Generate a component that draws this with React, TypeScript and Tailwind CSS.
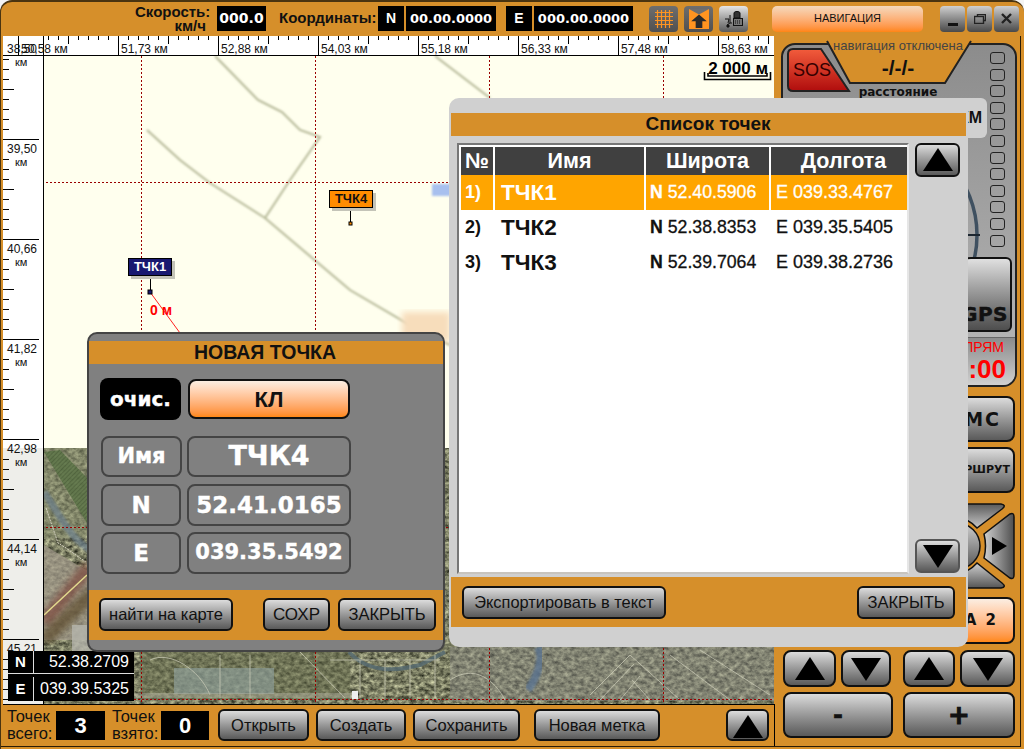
const BTN = "bg-linear-to-b from-[#dcdcdc] to-[#5a5a5a] border-2 border-[#111] rounded-[6px] flex items-center justify-center text-[#111]";
const ORANGE_BTN = "bg-linear-to-b from-[#fbeee2] to-[#ff8812] border-2 border-[#111] rounded-[6px] flex items-center justify-center text-[#111]";
const VERDANA = "font-['DejaVu_Sans',sans-serif] font-bold";
const FIELD = "border-2 border-[#444] rounded-[8px] flex items-center justify-center text-white font-['DejaVu_Sans',sans-serif] font-bold [-webkit-text-stroke:0.4px_white]";

const rows = [
  { no: "1)", name: "ТЧК1", lat: "52.40.5906", lon: "039.33.4767", active: true },
  { no: "2)", name: "ТЧК2", lat: "52.38.8353", lon: "039.35.5405", active: false },
  { no: "3)", name: "ТЧК3", lat: "52.39.7064", lon: "039.38.2736", active: false },
];

const topLabels = ["51,73", "52,88", "54,03", "55,18", "56,33", "57,48", "58,63"];
const leftLabels = ["39,50", "40,66", "41,82", "42,98", "44,14", "45,21"];

function Tri({ down = false, size = 30 }: { down?: boolean; size?: number }) {
  return (
    <svg width={size} height={size * 0.8} viewBox="0 0 30 24">
      <polygon points={down ? "0,1 30,1 15,24" : "15,0 30,23 0,23"} fill="#000" />
    </svg>
  );
}

function TopRuler() {
  const ticks = [];
  for (let x = 48; x < 774; x += 10) {
    const mid = (x - 18) % 50 === 0;
    ticks.push(<line key={x} x1={x + 0.5} x2={x + 0.5} y1={36} y2={mid ? 44 : 40} stroke="#000" />);
  }
  return (
    <svg className="block h-[20px] w-[771px] shrink-0 border-b border-black bg-white" viewBox="3 36 771 19" width={771} height={19}>
      {ticks}
      <line x1="18.5" x2="18.5" y1="36" y2="55" stroke="#000" />
      <line x1="43.5" x2="43.5" y1="36" y2="55" stroke="#000" />
      <text x="7" y="53" fontSize="12" fontFamily="Liberation Sans" fill="#111">38,50</text>
      <text x="21" y="53" fontSize="12" fontFamily="Liberation Sans" fill="#111">50,58 км</text>
      {topLabels.map((label, i) => (
        <g key={label}>
          <line x1={118.5 + i * 100} x2={118.5 + i * 100} y1="36" y2="55" stroke="#000" />
          <text x={121 + i * 100} y="53" fontSize="12" fontFamily="Liberation Sans" fill="#111">{label} км</text>
        </g>
      ))}
    </svg>
  );
}

function LeftRuler() {
  const ticks = [];
  for (let y = 59; y < 704; y += 10) {
    const step = (y - 39) % 100;
    if (step === 0 || step === 10) continue;
    ticks.push(<line key={y} x1="3" x2={step === 50 ? 14 : 9} y1={y + 0.5} y2={y + 0.5} stroke="#000" />);
  }
  return (
    <svg className="block shrink-0" width={41} height={648} viewBox="3 56 41 648">
      <rect x="3" y="56" width="40" height="392" fill="#fff" />
      <rect x="3" y="448" width="40" height="256" fill="#eeeeea" />
      {ticks}
      <line x1="43.5" x2="43.5" y1="56" y2="704" stroke="#000" />
      <text x="15" y="66" fontSize="11" fontFamily="Liberation Sans" fill="#111">км</text>
      {leftLabels.map((label, i) => (
        <g key={label}>
          <line x1="3" x2="39" y1={139.5 + i * 100} y2={139.5 + i * 100} stroke="#000" />
          <text x="7" y={153 + i * 100} fontSize="12" fontFamily="Liberation Sans" fill="#111">{label}</text>
          <text x="15" y={166 + i * 100} fontSize="11" fontFamily="Liberation Sans" fill="#111">км</text>
        </g>
      ))}
    </svg>
  );
}

function MapDrawing() {
  const gridX = [141, 315, 489, 663];
  const gridY = [182, 527, 699];
  return (
    <svg className="absolute inset-0" width={730} height={648} viewBox="44 56 730 648">
      <defs>
        <filter id="sat" x="0" y="0" width="100%" height="100%" colorInterpolationFilters="sRGB">
          <feTurbulence type="fractalNoise" baseFrequency="0.2 0.26" numOctaves="3" seed="7" />
          <feColorMatrix values="0.9 0 0 0 0.03  0.9 0 0 0 0.04  0.75 0 0 0 0.01  0 0 0 0 1" />
        </filter>
        <filter id="soft"><feGaussianBlur stdDeviation="0.8" /></filter>
        <filter id="softer"><feGaussianBlur stdDeviation="3" /></filter>
        <pattern id="rows" width="3" height="3" patternUnits="userSpaceOnUse" patternTransform="rotate(45)">
          <rect width="3" height="3" fill="#5d7548" />
          <rect width="1" height="3" fill="#4b6139" />
        </pattern>
      </defs>
      <rect x="44" y="56" width="730" height="392" fill="#ffffee" />
      <g fill="none" stroke="#b4b796" strokeWidth="2" filter="url(#soft)">
        <path d="M215 56 L258 100 L282 112 L300 130 L320 137 L290 180 L265 218" />
        <path d="M147 130 L180 160 L210 183 L265 218 L350 290 L410 325 L450 345" />
        <path d="M435 56 L490 98" />
      </g>
      <rect x="432" y="184" width="20" height="12" fill="#a8c0ee" filter="url(#soft)" />
      <rect x="402" y="312" width="48" height="30" fill="#f7ddbb" filter="url(#softer)" />

      <rect x="44" y="448" width="730" height="256" fill="#7a7860" filter="url(#sat)" />
      <rect x="44" y="448" width="50" height="90" fill="#8a9070" opacity="0.5" />
      <path d="M44 452 L60 450 L94 485 L94 535 Z" fill="url(#rows)" opacity="0.85" />
      <path d="M44 492 C60 515 70 540 94 552" stroke="#6c7f8c" strokeWidth="7" fill="none" opacity="0.7" filter="url(#soft)" />
      <path d="M46 508 L58 543 L66 548 L90 565" stroke="#d8d4c4" strokeWidth="1" strokeDasharray="2 1" fill="none" />
      <path d="M44 545 L94 575 L94 640 L44 640 Z" fill="#a39a8c" opacity="0.7" />
      <path d="M44 622 L90 566" stroke="#7d4a3c" strokeWidth="14" opacity="0.7" filter="url(#softer)" />
      <path d="M44 640 L94 592" stroke="#5c4a2a" strokeWidth="14" opacity="0.7" filter="url(#softer)" />
      <path d="M44 615 L87 575" stroke="#e2da8e" strokeWidth="1.5" fill="none" />
      <rect x="72" y="625" width="22" height="28" fill="#b5b5ac" opacity="0.8" />

      <rect x="140" y="652" width="210" height="48" fill="#64694a" opacity="0.5" />
      <rect x="174" y="668" width="100" height="26" fill="#8fa2a0" opacity="0.6" />
      <rect x="450" y="647" width="324" height="54" fill="#8a8a84" opacity="0.45" />
      <path d="M349 652 C370 675 400 670 420 665 L445 652" stroke="#566a70" strokeWidth="4" fill="none" opacity="0.85" />
      <path d="M538 647 C545 660 535 680 528 690" stroke="#5a7390" strokeWidth="8" fill="none" opacity="0.8" filter="url(#soft)" />
      <g stroke="#d0d0bc" strokeWidth="1" fill="none" opacity="0.7">
        <path d="M150 660 C170 650 200 670 210 695 M220 655 V698 M250 655 V698 M300 652 L345 698 M330 660 H440 M360 660 V698 M385 660 V698 M410 660 V698 M435 655 V698" />
        <path d="M590 695 L630 655 L680 700 M600 700 L634 664 M620 700 L640 676 M650 700 L632 680 M670 655 L730 700 M700 650 L770 695 M450 680 C480 660 500 690 505 700" />
      </g>
      <rect x="64" y="693" width="290" height="5" fill="#b5b5a5" opacity="0.45" />
      <rect x="352" y="691" width="6" height="8" fill="#eee" />
      {gridX.map((x) => (
        <line key={x} x1={x + 0.5} x2={x + 0.5} y1="56" y2="704" stroke="#990000" strokeDasharray="2 2" />
      ))}
      {gridY.map((y) => (
        <line key={y} x1="46" x2="774" y1={y + 0.5} y2={y + 0.5} stroke="#990000" strokeDasharray="2 2" />
      ))}
      <line x1="150" y1="292" x2="180" y2="333" stroke="#f22" />
      <line x1="150.5" x2="150.5" y1="275" y2="292" stroke="#000" />
      <rect x="148" y="290" width="4" height="4" fill="#191970" stroke="#000" />
      <line x1="350.5" x2="350.5" y1="208" y2="224" stroke="#000" />
      <rect x="349" y="222" width="3" height="3" fill="#ff8c00" stroke="#000" />
      <path d="M704.5 72 V79.5 H770.5 V72" stroke="#000" strokeWidth="1.6" fill="none" />
      <path d="M708 73 V76 H767 V73" stroke="#000" strokeWidth="1.6" fill="none" />
      <text x="150" y="315" fontSize="14" fontWeight="700" fontFamily="Liberation Sans" fill="#f00">0 м</text>
    </svg>
  );
}

function Pin({ name, className }: { name: string; className: string }) {
  return (
    <div className={`absolute h-[18px] w-[44px] border border-black text-center text-[13px] leading-[15px] font-bold shadow-[3px_3px_0_#c4c4b8] ${className}`}>
      {name}
    </div>
  );
}

function TopBar() {
  return (
    <div className="flex h-[34px] shrink-0 items-center pb-[1px] pl-[134px] font-['Liberation_Sans',sans-serif]">
      <div className="w-[74px] text-right text-[15px] leading-[14px] font-bold text-[#111]">
        Скорость:
        <br />
        <span className="pr-[3px]">км/ч</span>
      </div>
      <div className={`ml-[8px] flex h-[25px] w-[49px] items-center justify-center bg-black text-[14px] text-white ${VERDANA}`}>000.0</div>
      <div className="ml-[13px] w-[97px] text-[15px] font-bold whitespace-nowrap text-[#111]">Координаты:</div>
      <div className="ml-[2px] flex h-[25px] w-[26px] items-center justify-center bg-black text-[14px] font-bold text-white">N</div>
      <div className={`ml-[2px] flex h-[25px] w-[90px] items-center justify-center bg-black text-[13px] text-white ${VERDANA}`}>00.00.0000</div>
      <div className="ml-[10px] flex h-[25px] w-[26px] items-center justify-center bg-black text-[14px] font-bold text-white">E</div>
      <div className={`ml-[2px] flex h-[25px] w-[99px] items-center justify-center bg-black text-[13px] text-white ${VERDANA}`}>000.00.0000</div>

      <div className="ml-[16px] flex h-[26px] w-[29px] items-center justify-center rounded-[4px] bg-linear-to-b from-[#6e6e6e] to-[#505050]">
        <svg width="18" height="18" viewBox="0 0 18 18" stroke="#ff9420" strokeWidth="1.2" fill="none">
          <path d="M0 2.5H18M0 6.5H18M0 10.5H18M0 14.5H18M2.5 0V18M6.5 0V18M10.5 0V18M14.5 0V18" />
        </svg>
      </div>
      <div className="ml-[6px] flex h-[26px] w-[29px] items-center justify-center rounded-[4px] bg-linear-to-b from-[#6e6e6e] to-[#505050]">
        <svg width="20" height="20" viewBox="0 0 18 18">
          <path d="M0 0H18V18H0Z" fill="#ff9420" />
          <path d="M0 0L9 5L18 0" fill="#6e6e6e" />
          <path d="M9 5L16 11H12V17H6V11H2Z" fill="#2a2a2a" />
        </svg>
      </div>
      <div className="ml-[6px] flex h-[26px] w-[29px] items-center justify-center rounded-[4px] bg-linear-to-b from-[#e6e6e6] to-[#5c5c5c]">
        <svg width="20" height="18" viewBox="0 0 20 18" fill="none" stroke="#111">
          <path d="M10 8V3C10 1 16 1 16 3V8Z" fill="#333" />
          <rect x="9.5" y="8.5" width="9" height="7" fill="#777" />
          <path d="M11 11H17M11 13H17" strokeDasharray="1 1" />
          <path d="M6 5V13H8M6 13L3 15M1 9H5L4 13" />
          <circle cx="4" cy="16" r="1.2" fill="#111" />
        </svg>
      </div>

      <div className="ml-[24px] flex h-[26px] w-[151px] items-center justify-center rounded-[5px] bg-linear-to-b from-[#f4d9bd] to-[#ff8510] text-[11px] text-[#111]">
        НАВИГАЦИЯ
      </div>

      <div className="ml-[17px] flex gap-[2px]">
        <div className="flex h-[26px] w-[25px] items-end justify-center rounded-[4px] bg-linear-to-b from-[#d0d0d0] to-[#4a4a4a] pb-[6px]">
          <div className="h-[3px] w-[10px] bg-[#111]" />
        </div>
        <div className="flex h-[26px] w-[25px] items-center justify-center rounded-[4px] bg-linear-to-b from-[#d0d0d0] to-[#4a4a4a]">
          <svg width="12" height="10" viewBox="0 0 12 10" fill="none" stroke="#222">
            <path d="M3.5 2.5V0.5H11.5V6.5H9" strokeWidth="1.4" />
            <rect x="0.5" y="2.5" width="9" height="7" strokeWidth="1.4" />
          </svg>
        </div>
        <div className="flex h-[26px] w-[25px] items-center justify-center rounded-[4px] bg-linear-to-b from-[#d0d0d0] to-[#4a4a4a]">
          <svg width="11" height="11" viewBox="0 0 11 11" stroke="#222" strokeWidth="2.4">
            <path d="M1 1L10 10M10 1L1 10" />
          </svg>
        </div>
      </div>
    </div>
  );
}

function BottomBar() {
  return (
    <div className="flex h-[42px] shrink-0 items-center border-t border-r border-black pb-[1px] pl-[4px] font-['Liberation_Sans',sans-serif] text-[#111]">
      <div className="w-[49px] text-[16.5px] leading-[17px] whitespace-nowrap">Точек<br />всего:</div>
      <div className="flex h-[29px] w-[49px] items-center justify-center bg-black text-[22px] font-bold text-white">3</div>
      <div className="ml-[7px] w-[49px] text-[16.5px] leading-[17px] whitespace-nowrap">Точек<br />взято:</div>
      <div className="flex h-[29px] w-[48px] items-center justify-center bg-black text-[22px] font-bold text-white">0</div>
      <div className={`ml-[9px] h-[32px] w-[91px] text-[16.5px] ${BTN}`}>Открыть</div>
      <div className={`ml-[7px] h-[32px] w-[90px] text-[16.5px] ${BTN}`}>Создать</div>
      <div className={`ml-[7px] h-[32px] w-[107px] text-[16.5px] ${BTN}`}>Сохранить</div>
      <div className={`ml-[14px] h-[32px] w-[126px] text-[16.5px] ${BTN}`}>Новая метка</div>
      <div className={`ml-[66px] h-[32px] w-[43px] !items-end ${BTN}`}>
        <Tri size={30} />
      </div>
    </div>
  );
}

function NavCard() {
  const leds = Array.from({ length: 12 }, (_, i) => i);
  return (
    <div className="relative flex h-[344px] flex-col rounded-[14px] border-2 border-[#222] bg-linear-to-b from-[#8c8c8c] to-[#b8b8b8] font-['Liberation_Sans',sans-serif]">
      <div className="flex h-[211px]">
        <div className="relative w-[205px] shrink-0">
          <svg className="absolute top-[-2px] left-[-2px] overflow-visible" width="207" height="55" viewBox="781 43 207 55">
            <path d="M827 41 L850 83 H945 L971 41 Z" fill="#d68f2a" />
            <path d="M827 41 L850 83 H945 L971 41" fill="none" stroke="#222" strokeWidth="2" />
            <path d="M793 49 H821 L849 91 H793 Q788 91 788 86 V54 Q788 49 793 49 Z" fill="url(#sos)" stroke="#222" strokeWidth="2" />
            <defs>
              <linearGradient id="sos" x1="0" y1="0" x2="0" y2="1">
                <stop offset="0" stopColor="#f25c3c" />
                <stop offset="1" stopColor="#b00d0d" />
              </linearGradient>
            </defs>
            <text x="793" y="76" fontSize="18" fontFamily="Liberation Sans" fill="#300">SOS</text>
          </svg>
          <div className="relative mt-[-6px] flex w-[230px] flex-col items-center">
            <div className="text-[13px] leading-[14px] text-[#444]">навигация отключена</div>
            <div className="mt-[3px] text-[21px] leading-[24px] font-bold text-[#111]">-/-/-</div>
            <div className={`mt-[5px] text-[12px] leading-[14px] text-[#111] ${VERDANA}`}>расстояние</div>
          </div>
          <div className="relative mt-[-1px] flex h-[40px] w-[204px] items-center justify-end rounded-[6px] bg-[#d0d0d0] pr-[5px] text-[16px] font-bold text-[#111]">
            0 КМ
          </div>
          <svg className="overflow-visible" width="203" height="118" viewBox="783 138 203 118">
            <circle cx="872" cy="235" r="105" fill="none" stroke="#3f5060" strokeWidth="3.5" />
            <line x1="967" x2="980" y1="235" y2="235" stroke="#1c2630" strokeWidth="2" />
          </svg>
        </div>
        <div className="ml-[2px] flex flex-col gap-[4.6px] pt-[7px]">
          {leds.map((i) => (
            <div key={i} className="h-[12px] w-[15px] rounded-[3px] border-[1.5px] border-[#222]" />
          ))}
        </div>
      </div>
      <div className="relative flex justify-end pr-[3px]">
        <div className="mt-[1px] flex h-[75px] w-[75px] items-end justify-end rounded-tl-[34px] rounded-tr-[6px] rounded-br-[6px] border-2 border-[#111] bg-linear-to-b from-[#e0e0e0] to-[#4e4e4e] pr-[2px] pb-[6px]">
          <span className={`text-[20px] leading-[20px] tracking-[0.5px] text-[#111] [-webkit-text-stroke:0.5px_#111] ${VERDANA}`}>GPS</span>
        </div>
      </div>
      <div className="mt-[5px] flex flex-1 flex-col items-end rounded-br-[12px] border-t border-[#666] bg-linear-to-b from-[#8c8c8c] to-[#d0d0d0] pr-[9px] text-[#f00]">
        <div className="mt-[1px] pr-[2px] text-[14px] leading-[16px]">ПРЯМ</div>
        <div className="text-[26px] leading-[28px] font-bold">00:00</div>
      </div>
    </div>
  );
}

function RightPanel() {
  return (
    <div className="flex flex-1 flex-col pt-[7px] pr-[3px] pl-[6px] font-['Liberation_Sans',sans-serif]">
      <NavCard />
      <div className="flex flex-col items-end pr-[2px]">
        <div className={`mt-[9px] h-[46px] w-[130px] rounded-[8px] !justify-end pr-[12px] text-[19px] tracking-[2px] ${BTN} ${VERDANA}`}>СМС</div>
        <div className={`mt-[5px] h-[46px] w-[130px] rounded-[8px] !justify-end pr-[3px] text-[11px] ${BTN} ${VERDANA}`}>МАРШРУТ</div>
        <svg className="mt-[10px] overflow-visible" width="130" height="87" viewBox="885 503 130 87">
          <defs>
            <linearGradient id="padR" x1="0" y1="0" x2="1" y2="0">
              <stop offset="0" stopColor="#d0d0d0" />
              <stop offset="1" stopColor="#4e4e4e" />
            </linearGradient>
            <linearGradient id="padV" x1="0" y1="0" x2="0" y2="1">
              <stop offset="0" stopColor="#5a5a5a" />
              <stop offset="1" stopColor="#c8c8c8" />
            </linearGradient>
            <linearGradient id="padB" x1="0" y1="0" x2="0" y2="1">
              <stop offset="0" stopColor="#cfcfcf" />
              <stop offset="1" stopColor="#555" />
            </linearGradient>
          </defs>
          <circle cx="957" cy="546" r="23" fill="url(#padB)" stroke="#111" strokeWidth="1.5" />
          <path d="M895 504 H1001 Q1007 505 1002 509 L977 528 Q968 518 957 518 Q946 518 937 528 Z" fill="url(#padV)" stroke="#111" strokeWidth="1.5" />
          <path d="M895 588 H1001 Q1007 587 1002 583 L977 563 Q968 573 957 573 Q946 573 937 563 Z" fill="url(#padB)" stroke="#111" strokeWidth="1.5" />
          <path d="M1010 514 Q1014 512 1014 517 V575 Q1014 580 1010 578 L984 558 Q987 546 984 534 Z" fill="url(#padR)" stroke="#111" strokeWidth="1.5" />
          <polygon points="992,537 1007,546 992,555" fill="#000" />
        </svg>
        <div className={`mt-[7px] h-[47px] w-[130px] rounded-[8px] !justify-end pr-[15px] text-[15px] tracking-[2px] ${ORANGE_BTN} ${VERDANA}`}>КАРТА 2</div>
      </div>
      <div className="mt-[6px] flex pl-[2px]">
        <div className={`h-[37px] w-[53px] rounded-[8px] ${BTN}`}><Tri size={30} /></div>
        <div className={`ml-[5px] h-[37px] w-[50px] rounded-[8px] ${BTN}`}><Tri down size={30} /></div>
        <div className={`ml-[12px] h-[37px] w-[52px] rounded-[8px] ${BTN}`}><Tri size={30} /></div>
        <div className={`ml-[5px] h-[37px] w-[55px] rounded-[8px] ${BTN}`}><Tri down size={30} /></div>
      </div>
      <div className="mt-[5px] flex pl-[2px]">
        <div className={`h-[46px] w-[110px] rounded-[8px] text-[24px] [-webkit-text-stroke:0.6px_#111] ${BTN} ${VERDANA}`}>-</div>
        <div className={`ml-[10px] h-[46px] w-[112px] rounded-[8px] text-[26px] [-webkit-text-stroke:1px_#111] ${BTN} ${VERDANA}`}>+</div>
      </div>
    </div>
  );
}

function NewPointDialog() {
  return (
    <div className="absolute top-[332px] left-[87px] flex h-[320px] w-[358px] flex-col rounded-[10px] border-2 border-[#444] bg-[#808080] font-['Liberation_Sans',sans-serif]">
      <div className="mt-[7px] flex h-[23px] items-center justify-center bg-[#d68f2a] pr-[2px] text-[19.5px] font-bold text-[#111]">НОВАЯ ТОЧКА</div>
      <div className="mt-[14px] ml-[11px] flex items-center gap-[7px]">
        <div className={`flex h-[42px] w-[81px] items-center justify-center rounded-[8px] bg-black text-[20px] text-white [-webkit-text-stroke:0.4px_white] ${VERDANA}`}>очис.</div>
        <div className={`h-[40px] w-[162px] rounded-[8px] text-[22px] font-bold ${ORANGE_BTN}`}>КЛ</div>
      </div>
      <div className="mt-[16px] ml-[12px] flex gap-[5px]">
        <div className={`h-[41px] w-[81px] text-[21px] ${FIELD}`}>Имя</div>
        <div className={`h-[41px] w-[164px] text-[27px] ${FIELD}`}>ТЧК4</div>
      </div>
      <div className="mt-[7px] ml-[12px] flex gap-[6px]">
        <div className={`h-[42px] w-[80px] text-[23px] ${FIELD}`}>N</div>
        <div className={`h-[42px] w-[164px] text-[23px] ${FIELD}`}>52.41.0165</div>
      </div>
      <div className="mt-[6px] ml-[12px] flex gap-[6px]">
        <div className={`h-[42px] w-[80px] text-[23px] ${FIELD}`}>E</div>
        <div className={`h-[42px] w-[164px] text-[21px] ${FIELD}`}>039.35.5492</div>
      </div>
      <div className="mt-[16px] flex h-[50px] items-center bg-[#d68f2a] pb-[1px] pl-[10px]">
        <div className={`h-[33px] w-[134px] text-[16.5px] ${BTN}`}>найти на карте</div>
        <div className={`ml-[30px] h-[33px] w-[67px] text-[17px] ${BTN}`}>СОХР</div>
        <div className={`ml-[8px] h-[33px] w-[98px] text-[16.5px] ${BTN}`}>ЗАКРЫТЬ</div>
      </div>
    </div>
  );
}

function PointListDialog() {
  return (
    <div className="absolute top-[98px] left-[449px] flex h-[549px] w-[519px] flex-col rounded-[10px] bg-[#d0d0d0] px-[2px] font-['Liberation_Sans',sans-serif]">
      <div className="mt-[15px] flex h-[23px] items-center justify-center bg-[#d68f2a] pr-[1px] text-[19px] font-bold text-[#111]">Список точек</div>
      <div className="mt-[7px] flex h-[431px] pl-[6px]">
        <div className="h-full w-[452px] border-2 border-t-[#777] border-r-[#e6e6e6] border-b-[#c8c4be] border-l-[#777] bg-white pt-[2px] pl-[2px]">
          <div className="flex h-[28px] bg-[#404040] text-[21.5px] font-bold text-white">
            <div className="flex w-[34px] items-center justify-center border-r-2 border-white">№</div>
            <div className="flex w-[151px] items-center justify-center border-r-2 border-white">Имя</div>
            <div className="flex w-[125px] items-center justify-center border-r-2 border-white">Широта</div>
            <div className="flex flex-1 items-center justify-center pl-[9px]">Долгота</div>
          </div>
          {rows.map((row) => (
            <div key={row.no} className={`flex h-[35px] items-center ${row.active ? "bg-[#ffa500] text-white" : "text-[#111]"}`}>
              <div className={`flex h-full w-[34px] items-center border-r-2 pl-[4px] text-[18px] font-bold ${row.active ? "border-white" : "border-transparent"}`}>{row.no}</div>
              <div className={`flex h-full w-[151px] items-center border-r-2 pl-[6px] text-[22.5px] font-bold ${row.active ? "border-white" : "border-transparent"}`}>{row.name}</div>
              <div className={`flex h-full w-[125px] items-center border-r-2 pl-[4px] text-[17.7px] [-webkit-text-stroke:0.3px_currentColor] ${row.active ? "border-white" : "border-transparent"}`}>
                <b>N</b>&nbsp;{row.lat}
              </div>
              <div className="flex h-full flex-1 items-center pl-[5px] text-[18px] [-webkit-text-stroke:0.3px_currentColor]">E {row.lon}</div>
            </div>
          ))}
        </div>
        <div className="ml-[6px] flex h-full w-[45px] flex-col justify-between pb-[1px]">
          <div className={`h-[34px] w-[45px] rounded-[6px] ${BTN}`}><Tri size={30} /></div>
          <div className={`h-[34px] w-[45px] rounded-[6px] border-[#555] ${BTN}`}><Tri down size={30} /></div>
        </div>
      </div>
      <div className="mt-[3px] flex h-[50px] items-center justify-between bg-[#d68f2a] px-[11px]">
        <div className={`h-[33px] w-[204px] text-[16.4px] ${BTN}`}>Экспортировать в текст</div>
        <div className={`h-[33px] w-[98px] text-[16.5px] ${BTN}`}>ЗАКРЫТЬ</div>
      </div>
    </div>
  );
}

export default function App() {
  return (
    <div className="relative h-[749px] w-[1024px] overflow-hidden bg-[#f4f4f4]">
      <div className="flex h-[749px] w-[1024px] flex-col overflow-hidden rounded-t-[12px] border-t-2 border-l border-[#4a3410] bg-[#d68f2a] pr-[3px] pb-[2px]">
        <TopBar />
        <div className="flex min-h-0 flex-1 border-r border-b border-[#2a1c06]">
          <div className="ml-[2px] flex w-[772px] shrink-0 flex-col">
            <TopRuler />
            <div className="flex h-[648px] shrink-0">
              <LeftRuler />
              <div className="relative w-[730px] overflow-hidden font-['Liberation_Sans',sans-serif]">
                <MapDrawing />
                <Pin name="ТЧК4" className="top-[134px] left-[285px] bg-[#ff8c00] text-[#111]" />
                <Pin name="ТЧК1" className="top-[202px] left-[84px] bg-[#191970] text-white" />
                <div className="absolute top-[3px] right-[6px] text-[17px] leading-[20px] font-bold text-black">2 000 м</div>
              </div>
            </div>
            <BottomBar />
          </div>
          <RightPanel />
        </div>
      </div>
      <div className="absolute top-[651px] left-[8px] flex w-[126px] flex-col gap-[3px] bg-black font-['Liberation_Sans',sans-serif] text-white">
        <div className="flex h-[23px] items-center border-b border-[#ddd]">
          <div className="flex h-full w-[26px] items-center justify-center border-r border-[#ddd] text-[15px] font-bold">N</div>
          <div className="flex-1 pr-[5px] text-right text-[16px]">52.38.2709</div>
        </div>
        <div className="flex h-[24px] items-center">
          <div className="flex h-full w-[26px] items-center justify-center border-r border-[#ddd] text-[15px] font-bold">E</div>
          <div className="flex-1 pr-[5px] text-right text-[16px]">039.39.5325</div>
        </div>
      </div>
      <NewPointDialog />
      <PointListDialog />
    </div>
  );
}
